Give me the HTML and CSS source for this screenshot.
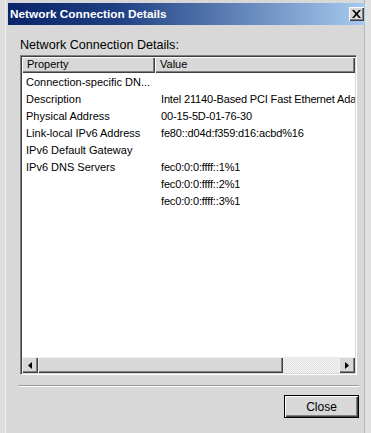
FILE: index.html
```html
<!DOCTYPE html>
<html>
<head>
<meta charset="utf-8">
<link rel="stylesheet" href="styles.css">
</head>
<body>
<div class="window">
  <div class="titlebar">
    <span class="title">Network Connection Details</span>
    <div class="xbtn"><svg width="9" height="8" viewBox="0 0 9 8"><path d="M0 0h2l2.5 2.7L7 0h2L5.6 4 9 8H7L4.5 5.3 2 8H0l3.4-4z" fill="#000"/></svg></div>
  </div>
  <div class="body">
    <div class="label">Network Connection Details:</div>
    <div class="listbox">
      <div class="header">
        <div class="hcell c1">Property</div>
        <div class="hcell c2">Value</div>
      </div>
      <div class="rows">
        <div class="row"><div class="cell c1">Connection-specific DN...</div><div class="cell c2"></div></div>
        <div class="row"><div class="cell c1">Description</div><div class="cell c2">Intel 21140-Based PCI Fast Ethernet Adapter</div></div>
        <div class="row"><div class="cell c1">Physical Address</div><div class="cell c2">00-15-5D-01-76-30</div></div>
        <div class="row"><div class="cell c1">Link-local IPv6 Address</div><div class="cell c2">fe80::d04d:f359:d16:acbd%16</div></div>
        <div class="row"><div class="cell c1">IPv6 Default Gateway</div><div class="cell c2"></div></div>
        <div class="row"><div class="cell c1">IPv6 DNS Servers</div><div class="cell c2">fec0:0:0:ffff::1%1</div></div>
        <div class="row"><div class="cell c1"></div><div class="cell c2">fec0:0:0:ffff::2%1</div></div>
        <div class="row"><div class="cell c1"></div><div class="cell c2">fec0:0:0:ffff::3%1</div></div>
      </div>
      <div class="hscroll">
        <div class="sbtn"><svg width="4" height="7" viewBox="0 0 4 7"><path d="M4 0v7L0 3.5z" fill="#000"/></svg></div>
        <div class="thumb"></div>
        <div class="track"></div>
        <div class="sbtn"><svg width="4" height="7" viewBox="0 0 4 7"><path d="M0 0v7l4-3.5z" fill="#000"/></svg></div>
      </div>
    </div>
    <div class="sep"></div>
    <div class="footer">
      <div class="closebtn">Close</div>
    </div>
  </div>
</div>
</body>
</html>
```

FILE: styles.css
```css
html, body {
  margin: 0;
  padding: 0;
  background: #e2e2e2;
}
.window {
  width: 371px;
  height: 433px;
  box-sizing: border-box;
  padding: 3px 6px 0 8px;
  background: #d8d8d8;
  font-family: "Liberation Sans", Arial, sans-serif;
  color: #000;
  display: flex;
  flex-direction: column;
  box-shadow: inset 5px 0 0 #dedede, inset 6px 0 0 #f2f2f2, inset -6px 0 0 #e0e0e0, inset -7px 0 0 #b8b8b8;
}
.titlebar {
  height: 22px;
  flex: none;
  background: linear-gradient(to right, #0a246a 0%, #1e3f82 30%, #a6caf0 100%);
  display: flex;
  align-items: center;
  justify-content: space-between;
  padding: 0 1px 0 2px;
}
.title {
  color: #fff;
  font-weight: bold;
  font-size: 11.8px;
}
.xbtn {
  width: 15px;
  height: 14px;
  background: #d8d8d8;
  box-shadow: inset 1px 1px 0 #fff, inset -1px -1px 0 #404040, inset -2px -2px 0 #808080;
  display: flex;
  align-items: center;
  justify-content: center;
}
.body {
  flex: 1;
  display: flex;
  flex-direction: column;
  padding: 0 8px 0 12px;
}
.label {
  font-size: 12.6px;
  line-height: 14px;
  margin-top: 13px;
  margin-bottom: 3px;
}
.listbox {
  height: 320px;
  box-sizing: border-box;
  background: #fff;
  border-top: 1px solid #808080;
  border-left: 1px solid #808080;
  border-right: 1px solid #fff;
  border-bottom: 1px solid #fff;
  box-shadow: inset 1px 1px 0 #404040, inset -1px -1px 0 #d8d8d8;
  padding: 1px;
  display: flex;
  flex-direction: column;
  font-size: 11px;
}
.header {
  height: 16px;
  flex: none;
  display: flex;
  background: #d8d8d8;
}
.hcell {
  box-sizing: border-box;
  height: 16px;
  line-height: 15px;
  padding-left: 5px;
  box-shadow: inset 1px 1px 0 #fff, inset -1px -1px 0 #404040, inset -2px -2px 0 #808080;
}
.hcell.c1 { width: 133px; }
.hcell.c2 { flex: 1; }
.rows {
  flex: 1;
  padding-top: 1px;
  overflow: hidden;
}
.row {
  display: flex;
  height: 17px;
  line-height: 17px;
  white-space: nowrap;
}
.cell.c1 {
  width: 133px;
  flex: none;
  box-sizing: border-box;
  padding-left: 4px;
}
.cell.c2 {
  flex: 1;
  min-width: 0;
  overflow: hidden;
  padding-left: 6px;
  letter-spacing: -0.15px;
}
.hscroll {
  height: 16px;
  flex: none;
  display: flex;
}
.sbtn, .thumb {
  background: #d8d8d8;
  box-shadow: inset 1px 1px 0 #f0f0f0, inset -1px -1px 0 #404040, inset -2px -2px 0 #808080;
}
.sbtn {
  width: 16px;
  display: flex;
  align-items: center;
  justify-content: center;
}
.thumb {
  width: 245px;
}
.track {
  flex: 1;
  background-color: #ececec;
  background-image: repeating-conic-gradient(#f4f4f4 0 25%, #e0e0e0 0 50%);
  background-size: 2px 2px;
}
.sep {
  margin: 10px -2px 0 -2px;
  height: 0;
  border-top: 1px solid #9a9a9a;
  border-bottom: 1px solid #fff;
}
.footer {
  display: flex;
  justify-content: flex-end;
  margin-top: 8px;
  margin-right: -2px;
}
.closebtn {
  width: 75px;
  height: 23px;
  box-sizing: border-box;
  border: 1px solid #000;
  background: #d8d8d8;
  box-shadow: inset 1px 1px 0 #fff, inset -1px -1px 0 #404040, inset -2px -2px 0 #808080;
  font-size: 12px;
  display: flex;
  align-items: center;
  justify-content: center;
}
```
